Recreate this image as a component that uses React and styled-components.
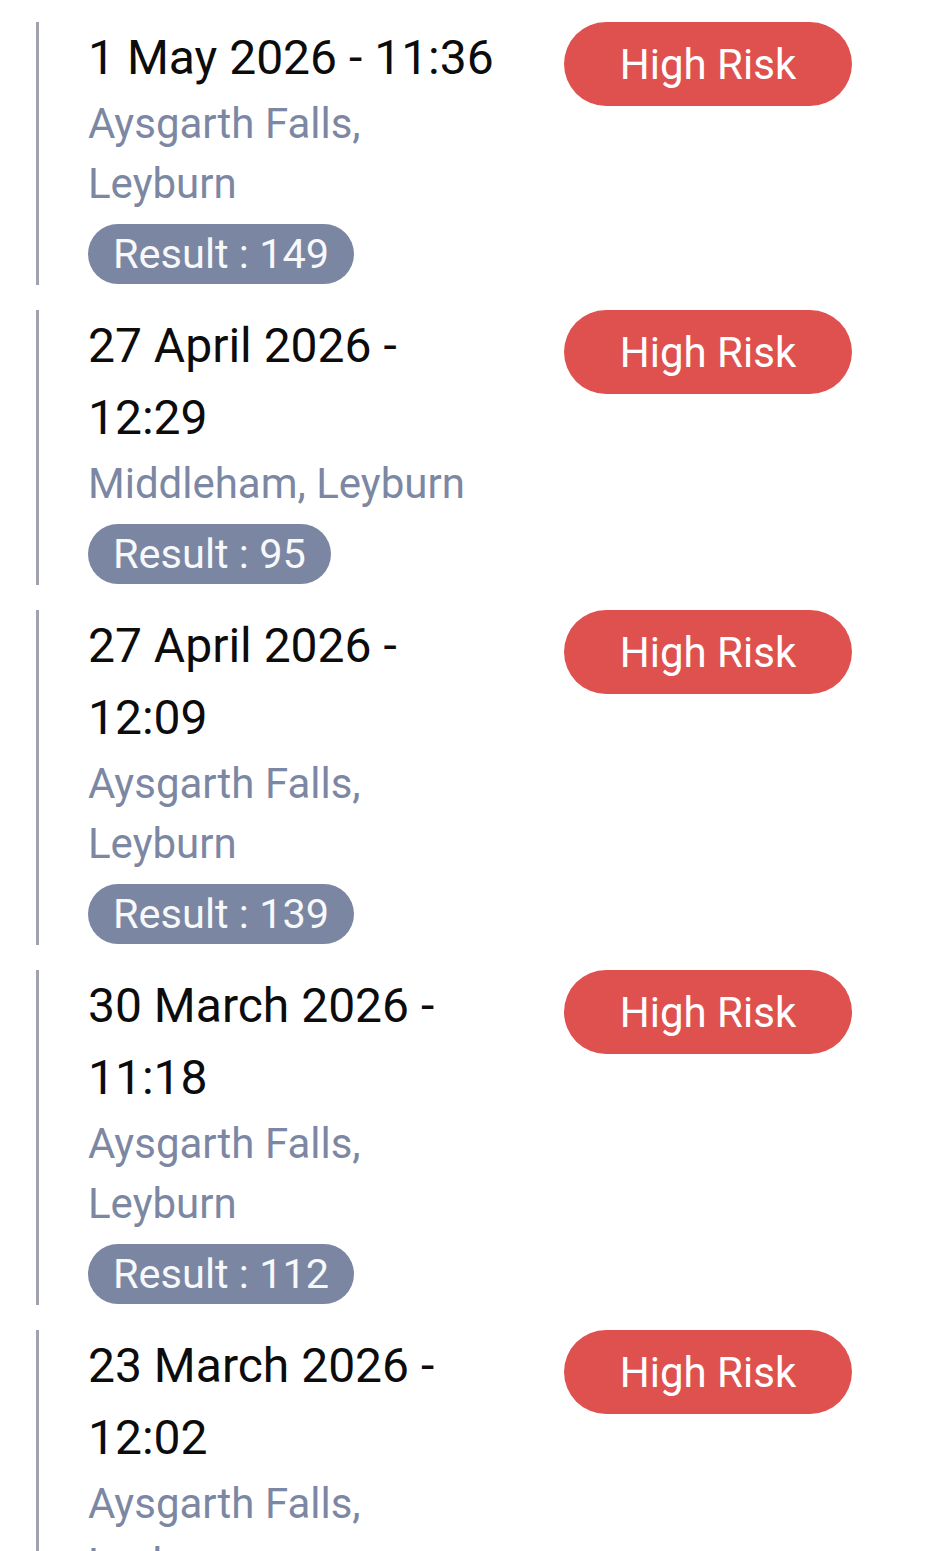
import React from 'react'
import styled, { createGlobalStyle } from 'styled-components'

const GlobalStyle = createGlobalStyle`
  body {
    margin: 0;
    background: #ffffff;
    font-family: Roboto, 'Liberation Sans', sans-serif;
  }
`;

const tests = [
  { date: '1 May 2026 - 11:36', place: 'Aysgarth Falls, Leyburn', result: 149 },
  { date: '27 April 2026 - 12:29', place: 'Middleham, Leyburn', result: 95 },
  { date: '27 April 2026 - 12:09', place: 'Aysgarth Falls, Leyburn', result: 139 },
  { date: '30 March 2026 - 11:18', place: 'Aysgarth Falls, Leyburn', result: 112 },
  { date: '23 March 2026 - 12:02', place: 'Aysgarth Falls, Leyburn', result: 104 },
];

function App() {
  return (
    <>
      <GlobalStyle />
      <List>
        {tests.map((t, i) => (
          <Item key={i}>
            <Info>
              <DateText>{t.date}</DateText>
              <Place>{t.place}</Place>
              <ResultPill>Result : {t.result}</ResultPill>
            </Info>
            <RiskBadge>High Risk</RiskBadge>
          </Item>
        ))}
      </List>
    </>
  )
}

export default App

const List = styled.div`
  display: flex;
  flex-direction: column;
  gap: 25px;
  padding: 22px 96px 40px 36px;
`;

const Item = styled.div`
  display: flex;
  align-items: flex-start;
  border-left: 3px solid #a0a2ad;
  padding-left: 49px;
  padding-bottom: 1px;
`;

const Info = styled.div`
  flex: 1;
  min-width: 0;
  display: flex;
  flex-direction: column;
  align-items: flex-start;
`;

const DateText = styled.div`
  font-size: 48px;
  line-height: 72px;
  color: #0c0c0c;
`;

const Place = styled.div`
  font-size: 42px;
  line-height: 60px;
  color: #7c87a4;
`;

const ResultPill = styled.div`
  margin-top: 10px;
  height: 60px;
  padding: 0 25px;
  border-radius: 30px;
  background: #7b86a2;
  color: #f7f8fa;
  font-size: 41.5px;
  line-height: 60px;
  white-space: nowrap;
`;

const RiskBadge = styled.div`
  flex: none;
  width: 288px;
  height: 84px;
  margin-left: 60px;
  border-radius: 42px;
  background: #df514e;
  color: #ffffff;
  font-size: 42px;
  display: flex;
  align-items: center;
  justify-content: center;
`;
